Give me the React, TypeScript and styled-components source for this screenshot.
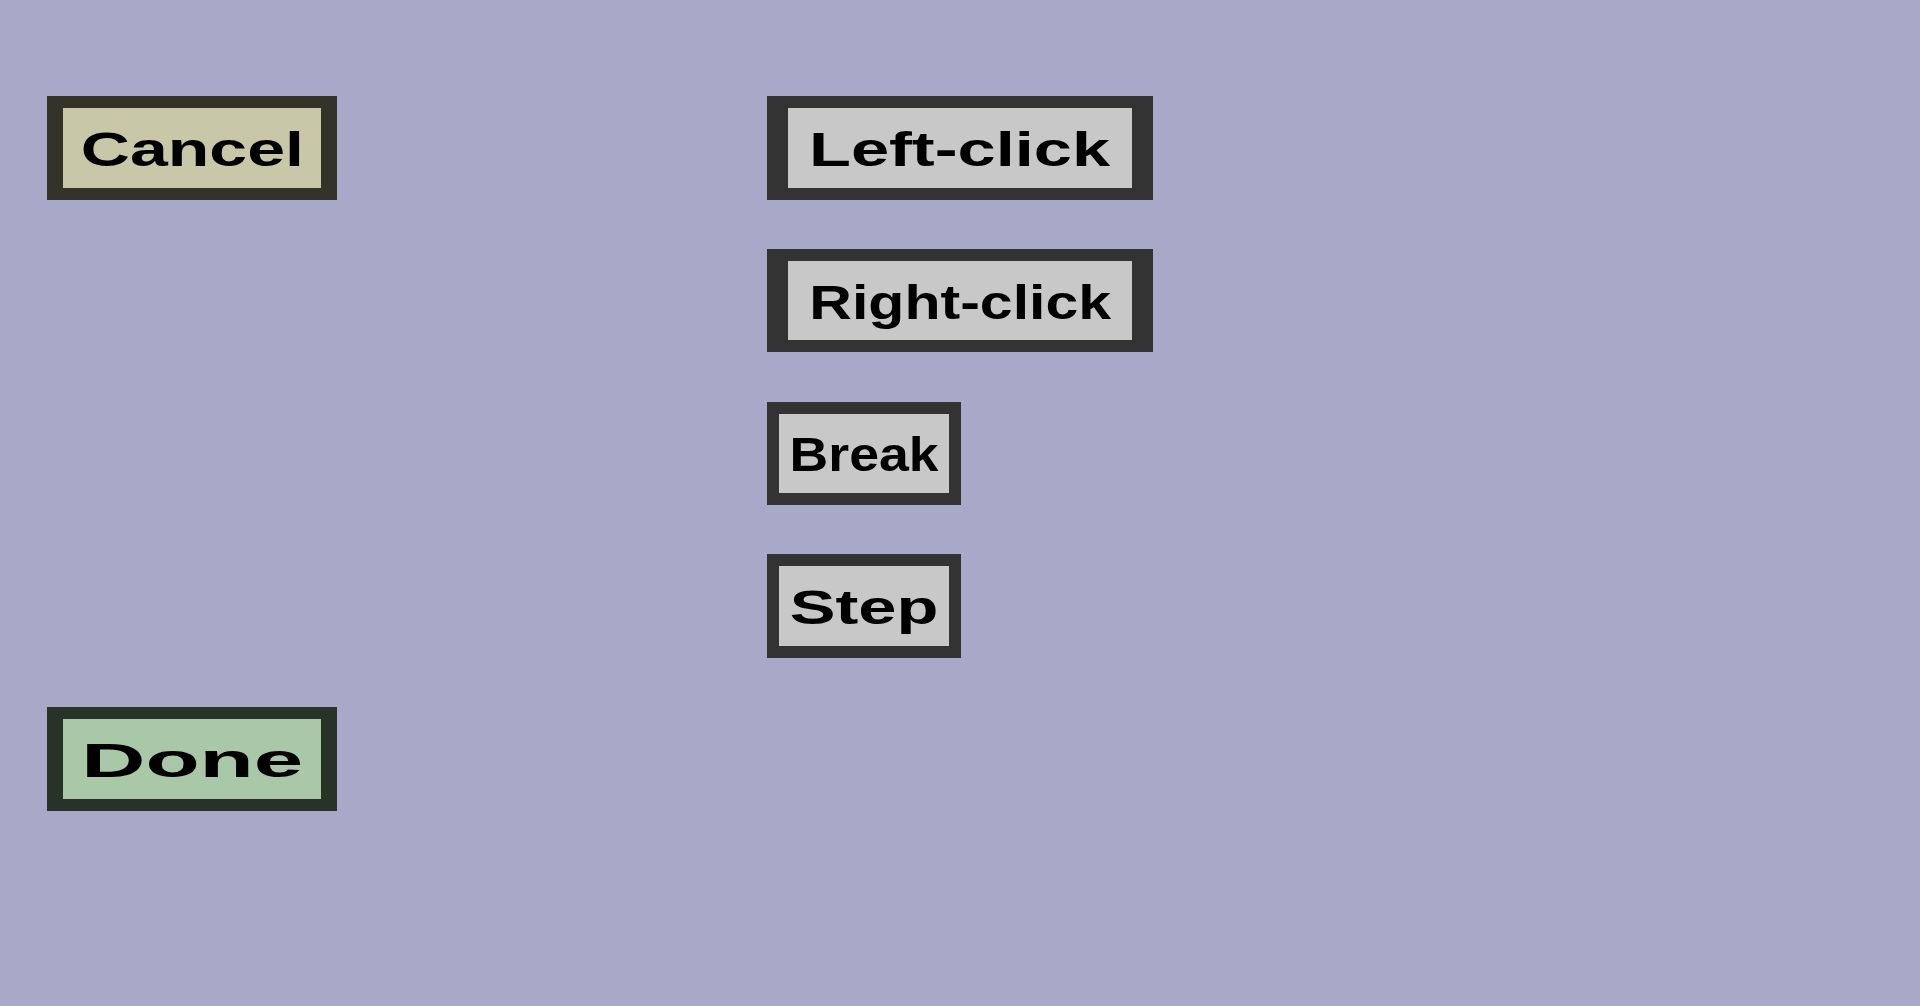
import React from "react";
import styled, { createGlobalStyle } from "styled-components";

const Global = createGlobalStyle`
  html, body {
    margin: 0;
    padding: 0;
    width: 100%;
    height: 100%;
    background: #a8a8c8;
    overflow: hidden;
  }
  #root {
    width: 100%;
    height: 100%;
  }
`;

const Page = styled.div`
  box-sizing: border-box;
  width: 1920px;
  height: 1006px;
  background: #a8a8c8;
  padding: 96px 0 0 47px;
  display: grid;
  grid-template-columns: 720px auto;
  grid-template-rows: repeat(5, 103.5px);
  row-gap: 49.25px;
  align-content: start;
  justify-content: start;
`;

type Tone = "neutral" | "cancel" | "done";

const fills: Record<Tone, string> = {
  neutral: "#c8c8c8",
  cancel: "#c8c8a8",
  done: "#a8c8a8",
};

const borders: Record<Tone, string> = {
  neutral: "#333333",
  cancel: "#33332a",
  done: "#283328",
};

const Button = styled.button<{
  $tone: Tone;
  $width: number;
  $side: number;
  $row: number;
  $col: number;
}>`
  grid-row: ${(p) => p.$row};
  grid-column: ${(p) => p.$col};
  box-sizing: border-box;
  width: ${(p) => p.$width}px;
  height: 103.5px;
  margin: 0;
  padding: 3px 0 0 0;
  border-style: solid;
  border-color: ${(p) => borders[p.$tone]};
  border-width: 12px ${(p) => p.$side}px;
  background: ${(p) => fills[p.$tone]};
  display: flex;
  align-items: center;
  justify-content: center;
  overflow: hidden;
  cursor: pointer;
`;

const Label = styled.span<{ $stretch: number }>`
  display: inline-block;
  font-family: "Liberation Sans", Arial, sans-serif;
  font-weight: 700;
  font-size: 49px;
  line-height: 1;
  color: #000000;
  white-space: nowrap;
  transform: scaleX(${(p) => p.$stretch});
  transform-origin: center center;
  -webkit-font-smoothing: none;
`;

type Spec = {
  text: string;
  tone: Tone;
  width: number;
  side: number;
  row: number;
  col: number;
  stretch: number;
};

const buttons: Spec[] = [
  { text: "Cancel", tone: "cancel", width: 290, side: 16.5, row: 1, col: 1, stretch: 1.388 },
  { text: "Done", tone: "done", width: 290, side: 16.5, row: 5, col: 1, stretch: 1.812 },
  { text: "Left-click", tone: "neutral", width: 386, side: 21, row: 1, col: 2, stretch: 1.4 },
  { text: "Right-click", tone: "neutral", width: 386, side: 21, row: 2, col: 2, stretch: 1.205 },
  { text: "Break", tone: "neutral", width: 194, side: 12, row: 3, col: 2, stretch: 1.094 },
  { text: "Step", tone: "neutral", width: 194, side: 12, row: 4, col: 2, stretch: 1.4 },
];

export default function App() {
  return (
    <>
      <Global />
      <Page>
        {buttons.map((b) => (
          <Button
            key={b.text}
            $tone={b.tone}
            $width={b.width}
            $side={b.side}
            $row={b.row}
            $col={b.col}
          >
            <Label $stretch={b.stretch}>{b.text}</Label>
          </Button>
        ))}
      </Page>
    </>
  );
}
